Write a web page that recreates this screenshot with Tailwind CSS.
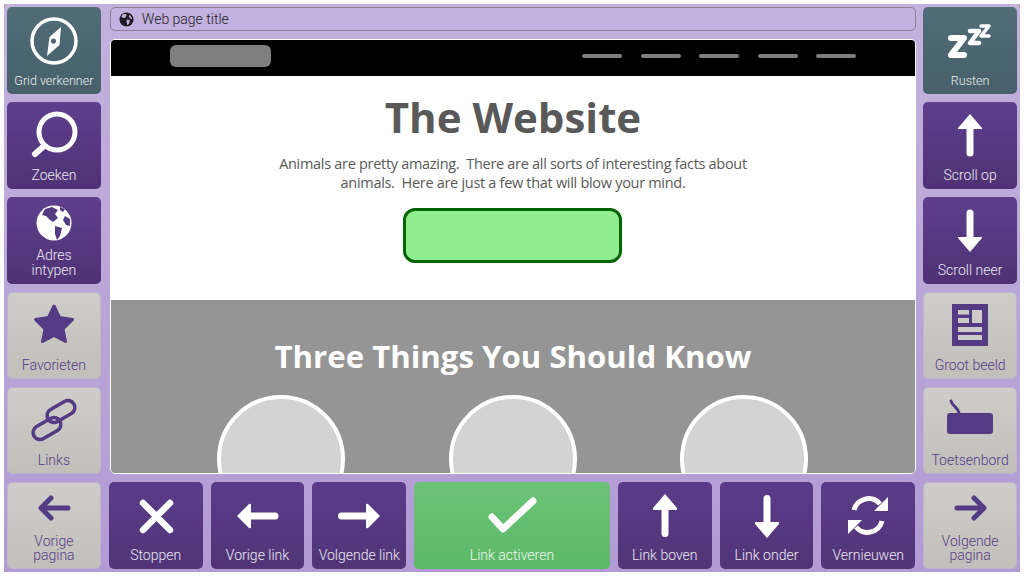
<!DOCTYPE html>
<html lang="en">
<head>
    <meta charset="UTF-8">
    <title>Grid browser</title>
    <script src="https://cdn.jsdelivr.net/npm/@tailwindcss/browser@4"></script>
</head>
<body class="bg-white w-[1024px] h-[576px] overflow-hidden font-['Roboto',sans-serif]">
    <div class="m-[4px] w-[1016px] h-[568px] p-[3px] grid grid-cols-10 grid-rows-6 gap-[8px] bg-gradient-to-b from-[#c2b1dd] to-[#b29bd5]">

        <!-- Row 1 -->
        <div class="rounded-[5px] flex flex-col justify-between items-center overflow-hidden bg-gradient-to-b from-[#516d78] to-[#47606a] text-white/90">
            <svg width="94" height="66" viewBox="7 7 94 66"><circle cx="54" cy="41" r="22" fill="none" stroke="#fff" stroke-width="3.5"/><path fill="#fff" fill-rule="evenodd" d="M61 27 L59.5 45 L47 56 L49.5 37 Z M53.5 38.5 a2.6 2.6 0 1 0 .01 0 Z"/></svg>
            <span class="text-[12.5px] leading-[15px] font-light pb-[6px] text-center">Grid verkenner</span>
        </div>

        <!-- Browser area -->
        <div class="col-span-8 row-span-5 flex flex-col gap-[8px] ml-[1px] mr-[-1px]">
            <div class="h-[24px] shrink-0 flex items-center gap-[8px] pl-[8px] rounded-[5px] border border-[#8d7f99] bg-[#c2b0de] text-[#222] text-[14px] leading-none">
                <svg width="15" height="15" viewBox="0 0 16 16"><circle cx="8" cy="8" r="7.5" fill="#1e1a24"/><path fill="#c2b0de" d="M4 2.5 L7.5 2 L8 4 L6.5 6 L4.5 6.5 L2.5 5 Z M8.5 8 L11.5 8.5 L11 12 L9 14 L8 11 Z M11 3 L13.5 5.5 L14 8 L12 7 L10.5 5 Z"/></svg>
                <span class="font-light">Web page title</span>
            </div>
            <div class="flex-1 min-h-0 flex flex-col overflow-hidden rounded-[5px] border-[1.5px] border-white font-['Open_Sans',sans-serif]">
                <div class="h-[36px] shrink-0 bg-black flex items-center justify-between pl-[59px] pr-[59px] pb-[4px]">
                    <div class="w-[101px] h-[22px] rounded-[6px] bg-[#7f7f7f]"></div>
                    <div class="flex gap-[18.5px]">
                        <div class="w-[40px] h-[4px] rounded-full bg-[#7f7f7f]"></div>
                        <div class="w-[40px] h-[4px] rounded-full bg-[#7f7f7f]"></div>
                        <div class="w-[40px] h-[4px] rounded-full bg-[#7f7f7f]"></div>
                        <div class="w-[40px] h-[4px] rounded-full bg-[#7f7f7f]"></div>
                        <div class="w-[40px] h-[4px] rounded-full bg-[#7f7f7f]"></div>
                    </div>
                </div>
                <div class="h-[224px] shrink-0 bg-white flex flex-col items-center pt-[12px] text-[#595959]">
                    <h1 class="text-[42px] leading-[58px] font-bold">The Website</h1>
                    <p class="mt-[8px] w-[480px] text-center text-[14.5px] leading-[19px] tracking-[-0.3px]">Animals are pretty amazing.&nbsp; There are all sorts of interesting facts about animals.&nbsp; Here are just a few that will blow your mind.</p>
                    <div class="mt-[16px] w-[219px] h-[55px] rounded-[12px] border-[3.5px] border-[#006400] bg-[#90ee90]"></div>
                </div>
                <div class="flex-1 min-h-0 overflow-hidden bg-[#959595] flex flex-col items-center pt-[34px]">
                    <h2 class="text-[31.2px] leading-[44px] font-bold text-white">Three Things You Should Know</h2>
                    <div class="mt-[17px] flex gap-[103.5px]">
                        <div class="w-[128px] h-[128px] shrink-0 rounded-full border-[4px] border-white bg-[#d3d3d3]"></div>
                        <div class="w-[128px] h-[128px] shrink-0 rounded-full border-[4px] border-white bg-[#d3d3d3]"></div>
                        <div class="w-[128px] h-[128px] shrink-0 rounded-full border-[4px] border-white bg-[#d3d3d3]"></div>
                    </div>
                </div>
            </div>
        </div>

        <div class="rounded-[5px] flex flex-col justify-between items-center overflow-hidden bg-gradient-to-b from-[#516d78] to-[#47606a] text-white/90">
            <svg width="94" height="66" viewBox="923 7 94 66"><g fill="none" stroke="#fff" stroke-linecap="round" stroke-linejoin="round"><path stroke-width="6" d="M951 38 H964 L951 55 H964"/><path stroke-width="4.500" d="M970 31 H979 L970 43 H979"/><path stroke-width="3.500" d="M981 26 H989 L981 36 H989"/></g></svg>
            <span class="text-[12.5px] leading-[15px] font-light pb-[6px] text-center">Rusten</span>
        </div>

        <!-- Row 2 -->
        <div class="rounded-[5px] flex flex-col justify-between items-center overflow-hidden bg-gradient-to-b from-[#5e3f8e] to-[#4e3274] text-white/90">
            <svg width="94" height="66" viewBox="7 102 94 66"><circle cx="57" cy="132" r="18" fill="none" stroke="#fff" stroke-width="5"/><path stroke="#fff" stroke-width="6" stroke-linecap="round" d="M44 146 L35 154"/></svg>
            <span class="text-[14px] leading-[15px] font-light pb-[6px] text-center">Zoeken</span>
        </div>
        <div class="rounded-[5px] flex flex-col justify-between items-center overflow-hidden bg-gradient-to-b from-[#5e3f8e] to-[#4e3274] text-white/90">
            <svg width="94" height="66" viewBox="923 102 94 66"><path fill="#fff" d="M970 114 L982 128 Q982.500 129.500 981 129 H973.500 V153 A3.500 3.500 0 0 1 966.500 153 V129 H959 Q957.500 129.500 958 128 Z"/></svg>
            <span class="text-[14px] leading-[15px] font-light pb-[6px] text-center">Scroll op</span>
        </div>

        <!-- Row 3 -->
        <div class="rounded-[5px] flex flex-col justify-between items-center overflow-hidden bg-gradient-to-b from-[#5e3f8e] to-[#4e3274] text-white/90">
            <svg width="94" height="51" viewBox="7 197 94 51"><circle cx="54" cy="223" r="17.500" fill="#fff"/><path fill="#553a84" d="M45 209 L52 207 L58 210 L55 214 L58 218 L53 222 L49 219 L46 216 L42 215 Z M55 226 L62 228 L60 236 L57 240 L55 234 Z M65 216 L70 219 L70 226 L66 225 L63 220 Z M60 207 L65 209 L63 212 L60 210 Z"/></svg>
            <span class="text-[14px] leading-[15px] font-light pb-[6px] text-center">Adres<br>intypen</span>
        </div>
        <div class="rounded-[5px] flex flex-col justify-between items-center overflow-hidden bg-gradient-to-b from-[#5e3f8e] to-[#4e3274] text-white/90">
            <svg width="94" height="66" viewBox="923 197 94 66"><path fill="#fff" d="M970 252 L982 238 Q982.500 236.500 981 237 H973.500 V213 A3.500 3.500 0 0 0 966.500 213 V237 H959 Q957.500 236.500 958 238 Z"/></svg>
            <span class="text-[14px] leading-[15px] font-light pb-[6px] text-center">Scroll neer</span>
        </div>

        <!-- Row 4 -->
        <div class="rounded-[5px] flex flex-col justify-between items-center overflow-hidden border border-[#bdb5cb] bg-gradient-to-b from-[#cfcdca] to-[#c1bfba] text-[#573b88]">
            <svg width="92" height="65" viewBox="8 293 92 65"><path fill="#553a84" stroke="#553a84" stroke-width="3" stroke-linejoin="round" d="M54 306 L59.500 317.500 L72.500 319.500 L63 329 L65.500 341.500 L54 335.500 L42.500 341.500 L45 329 L35.500 319.500 L48.500 317.500 Z"/></svg>
            <span class="text-[14px] leading-[15px] font-light pb-[5px] text-center">Favorieten</span>
        </div>
        <div class="rounded-[5px] flex flex-col justify-between items-center overflow-hidden border border-[#bdb5cb] bg-gradient-to-b from-[#cfcdca] to-[#c1bfba] text-[#573b88]">
            <svg width="92" height="65" viewBox="924 293 92 65"><path fill="#553a84" d="M952 304 H988 V346 H952 Z"/><path fill="#cdcbc7" d="M958 310 H969 V314.500 H958 Z M958 318 H969 V323 H958 Z M972 310 H982 V323 H972 Z M958 327 H982 V332 H958 Z M958 335 H982 V340 H958 Z"/></svg>
            <span class="text-[14px] leading-[15px] font-light pb-[5px] text-center">Groot beeld</span>
        </div>

        <!-- Row 5 -->
        <div class="rounded-[5px] flex flex-col justify-between items-center overflow-hidden border border-[#bdb5cb] bg-gradient-to-b from-[#cfcdca] to-[#c1bfba] text-[#573b88]">
            <svg width="92" height="65" viewBox="8 388 92 65"><g fill="none" stroke="#553a84" stroke-width="3.500"><rect x="46" y="404.500" width="30" height="14" rx="7" transform="rotate(-30 61 411.500)"/><rect x="32" y="421.500" width="30" height="14" rx="7" transform="rotate(-30 47 428.500)"/></g></svg>
            <span class="text-[14px] leading-[15px] font-light pb-[5px] text-center">Links</span>
        </div>
        <div class="rounded-[5px] flex flex-col justify-between items-center overflow-hidden border border-[#bdb5cb] bg-gradient-to-b from-[#cfcdca] to-[#c1bfba] text-[#573b88]">
            <svg width="92" height="65" viewBox="924 388 92 65"><rect x="947" y="413" width="46" height="21" rx="3" fill="#553a84"/><path fill="none" stroke="#553a84" stroke-width="3" stroke-linecap="round" d="M951 401 C952 406 958 407 959 413"/></svg>
            <span class="text-[14px] leading-[15px] font-light pb-[5px] text-center">Toetsenbord</span>
        </div>

        <!-- Bottom row -->
        <div class="rounded-[5px] flex flex-col justify-between items-center overflow-hidden border border-[#bdb5cb] bg-gradient-to-b from-[#cfcdca] to-[#c1bfba] text-[#573b88]">
            <svg width="92" height="50" viewBox="8 483 92 50"><path fill="none" stroke="#553a84" stroke-width="5" stroke-linecap="round" stroke-linejoin="round" d="M68 508 H42 M51 498 L41 508 L51 518"/></svg>
            <span class="text-[14px] leading-[14px] font-light pb-[6px] text-center">Vorige<br>pagina</span>
        </div>
        <div class="rounded-[5px] flex flex-col justify-between items-center overflow-hidden bg-gradient-to-b from-[#5a3c8a] to-[#503476] text-white/90">
            <svg width="94" height="66" viewBox="109 482 94 66"><path stroke="#fff" stroke-width="6.500" stroke-linecap="round" d="M143 503 L170 530 M170 503 L143 530"/></svg>
            <span class="text-[14px] leading-[15px] font-light pb-[6px] text-center">Stoppen</span>
        </div>
        <div class="rounded-[5px] flex flex-col justify-between items-center overflow-hidden bg-gradient-to-b from-[#5a3c8a] to-[#503476] text-white/90">
            <svg width="94" height="66" viewBox="211 482 94 66"><path fill="#fff" d="M237 516 L249 504 Q251 503 251 505 V512.500 H275 A3.500 3.500 0 0 1 275 519.500 H251 V527 Q251 529 249 528 Z"/></svg>
            <span class="text-[14px] leading-[15px] font-light pb-[6px] text-center">Vorige link</span>
        </div>
        <div class="rounded-[5px] flex flex-col justify-between items-center overflow-hidden bg-gradient-to-b from-[#5a3c8a] to-[#503476] text-white/90">
            <svg width="94" height="66" viewBox="313 482 94 66"><path fill="#fff" d="M381 516 L369 504 Q367 503 367 505 V512.500 H342.500 A3.500 3.500 0 0 0 342.500 519.500 H367 V527 Q367 529 369 528 Z"/></svg>
            <span class="text-[14px] leading-[15px] font-light pb-[6px] text-center">Volgende link</span>
        </div>
        <div class="col-span-2 rounded-[5px] flex flex-col justify-between items-center overflow-hidden bg-gradient-to-b from-[#6bc377] to-[#5bb967] text-white/90">
            <svg width="196" height="66" viewBox="414 482 196 66"><path fill="none" stroke="#fff" stroke-width="7" stroke-linecap="round" stroke-linejoin="round" d="M492 517 L503 529 L533 501"/></svg>
            <span class="text-[14px] leading-[15px] font-light pb-[6px] text-center">Link activeren</span>
        </div>
        <div class="rounded-[5px] flex flex-col justify-between items-center overflow-hidden bg-gradient-to-b from-[#5a3c8a] to-[#503476] text-white/90">
            <svg width="94" height="66" viewBox="618 482 94 66"><path fill="#fff" d="M665 494 L677 508 Q677.500 510 676 510 H668.500 V533.500 A3.500 3.500 0 0 1 661.500 533.500 V510 H654 Q652.500 510 653 508 Z"/></svg>
            <span class="text-[14px] leading-[15px] font-light pb-[6px] text-center">Link boven</span>
        </div>
        <div class="rounded-[5px] flex flex-col justify-between items-center overflow-hidden bg-gradient-to-b from-[#5a3c8a] to-[#503476] text-white/90">
            <svg width="94" height="66" viewBox="720 482 94 66"><path fill="#fff" d="M767 538 L779 524 Q779.500 522 778 522 H770.500 V498.500 A3.500 3.500 0 0 0 763.500 498.500 V522 H756 Q754.500 522 755 524 Z"/></svg>
            <span class="text-[14px] leading-[15px] font-light pb-[6px] text-center">Link onder</span>
        </div>
        <div class="rounded-[5px] flex flex-col justify-between items-center overflow-hidden bg-gradient-to-b from-[#5a3c8a] to-[#503476] text-white/90">
            <svg width="94" height="66" viewBox="821 482 94 66"><g fill="none" stroke="#fff" stroke-width="5"><path d="M854 510 A15 15 0 0 1 880 504"/><path d="M882 521 A15 15 0 0 1 856 527"/></g><path fill="#fff" d="M888 497 V511 H874 Z M848 534 V520 H862 Z"/></svg>
            <span class="text-[14px] leading-[15px] font-light pb-[6px] text-center">Vernieuwen</span>
        </div>
        <div class="rounded-[5px] flex flex-col justify-between items-center overflow-hidden border border-[#bdb5cb] bg-gradient-to-b from-[#cfcdca] to-[#c1bfba] text-[#573b88]">
            <svg width="92" height="50" viewBox="924 483 92 50"><path fill="none" stroke="#553a84" stroke-width="5" stroke-linecap="round" stroke-linejoin="round" d="M957 508 H983 M974 498 L984 508 L974 518"/></svg>
            <span class="text-[14px] leading-[14px] font-light pb-[6px] text-center">Volgende<br>pagina</span>
        </div>
    </div>
</body>
</html>
